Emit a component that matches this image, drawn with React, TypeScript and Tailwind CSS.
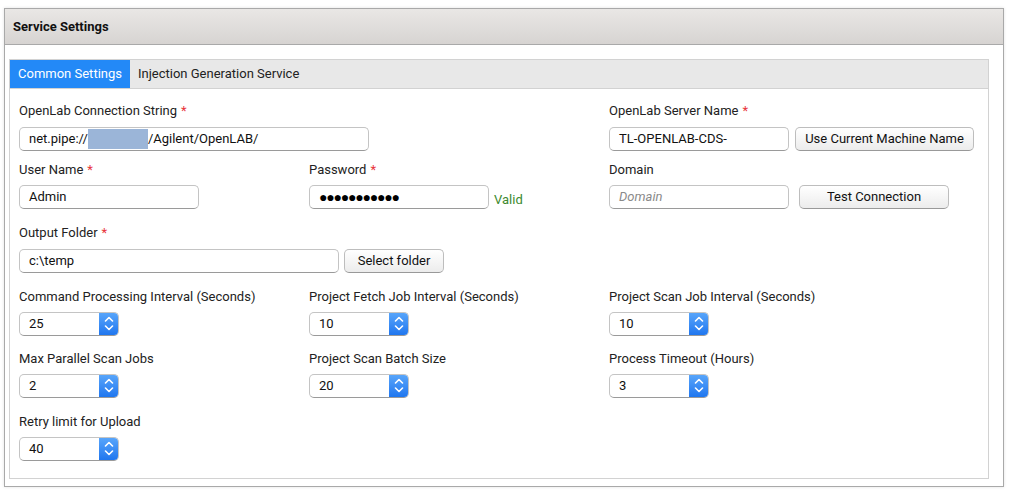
import React from "react";

const font = { fontFamily: "Roboto, 'Liberation Sans', sans-serif" };

function Label({ text, req }: { text: string; req?: boolean }) {
  return (
    <div className="h-4 leading-4 text-[13px] text-[#222]">
      {text}
      {req && <span className="text-[#e8343a] ml-[4px]">*</span>}
    </div>
  );
}

function TextBox({ w, children, placeholder }: { w: string; children?: React.ReactNode; placeholder?: string }) {
  return (
    <div
      className={`${w} h-[24px] rounded-[5px] border border-[#c4c4c4] border-b-[#9a9a9a] bg-white flex items-center pl-[9px] text-[13px] text-[#111] overflow-hidden whitespace-nowrap`}
    >
      {children ?? <span className="italic text-[#8a8a8a]">{placeholder}</span>}
    </div>
  );
}

function Btn({ w, text }: { w: string; text: string }) {
  return (
    <div
      className={`${w} h-[24px] rounded-[5px] border border-[#bdbdbd] border-b-[#999] bg-gradient-to-b from-white to-[#ececec] flex items-center justify-center text-[13px] text-[#111] whitespace-nowrap`}
    >
      {text}
    </div>
  );
}

function Spinner({ value }: { value: string }) {
  return (
    <div className="w-[100px] h-[24px] flex rounded-[5px] border border-[#c4c4c4] border-b-[#9a9a9a] bg-white overflow-hidden">
      <div className="flex-1 flex items-center pl-[9px] text-[13px] text-[#111]">{value}</div>
      <div className="w-[20px] -my-px -mr-px bg-gradient-to-b from-[#5aa7fb] to-[#1c74ee] rounded-r-[5px] flex flex-col items-center justify-center gap-[3px]">
        <svg width="10" height="6" viewBox="0 0 10 6">
          <path d="M1.5 5 L5 1.5 L8.5 5" fill="none" stroke="white" strokeWidth="1.6" strokeLinecap="round" strokeLinejoin="round" />
        </svg>
        <svg width="10" height="6" viewBox="0 0 10 6">
          <path d="M1.5 1 L5 4.5 L8.5 1" fill="none" stroke="white" strokeWidth="1.6" strokeLinecap="round" strokeLinejoin="round" />
        </svg>
      </div>
    </div>
  );
}

function SpinField({ label, value }: { label: string; value: string }) {
  return (
    <div className="flex flex-col gap-[7px]">
      <Label text={label} />
      <Spinner value={value} />
    </div>
  );
}

export default function App() {
  return (
    <div className="w-[1010px] h-[491px] bg-white pt-[8px] pl-[4px]" style={font}>
      <div className="w-[1000px] h-[479px] border border-[#a9a9a9] shadow-[0_0_3px_rgba(0,0,0,0.12)] flex flex-col">
        <div className="h-[36px] shrink-0 bg-gradient-to-b from-[#e9e7e5] to-[#d7d4d2] border-b border-[#a9a9a9] flex items-center pl-[8px] text-[13px] font-bold text-[#111]">
          Service Settings
        </div>
        <div className="pt-[14px] pl-[4px] pr-[14px]">
          <div className="w-[980px] h-[420px] border border-[#d2d2d2] flex flex-col">
            <div className="h-[29px] shrink-0 bg-[#e8e8e8] border-b border-[#d2d2d2] flex text-[13px]">
              <div className="w-[120px] bg-[#2389f7] text-white flex items-center justify-center">Common Settings</div>
              <div className="px-[8px] flex items-center text-[#222]">Injection Generation Service</div>
            </div>
            <div className="pl-[9px] pt-[14px]">
              <div className="grid grid-cols-[590px_1fr]">
                <div className="flex flex-col gap-[8px]">
                  <Label text="OpenLab Connection String" req />
                  <TextBox w="w-[350px]">
                    <span>net.pipe://</span>
                    <span className="inline-block w-[60px] h-[20px] bg-[#9bb5d8]" />
                    <span>/Agilent/OpenLAB/</span>
                  </TextBox>
                </div>
                <div className="flex flex-col gap-[8px]">
                  <Label text="OpenLab Server Name" req />
                  <div className="flex gap-[6px]">
                    <TextBox w="w-[180px]">TL-OPENLAB-CDS-</TextBox>
                    <Btn w="w-[179px]" text="Use Current Machine Name" />
                  </div>
                </div>
              </div>
              <div className="grid grid-cols-[290px_300px_1fr] mt-[11px]">
                <div className="flex flex-col gap-[7px]">
                  <Label text="User Name" req />
                  <TextBox w="w-[180px]">Admin</TextBox>
                </div>
                <div className="flex flex-col gap-[7px]">
                  <Label text="Password" req />
                  <div className="flex items-center gap-[5px]">
                    <TextBox w="w-[180px]">
                      <span className="text-[14px] tracking-[-1.2px] text-black leading-none">●●●●●●●●●●●</span>
                    </TextBox>
                    <span className="text-[13px] text-[#3c8a2e] mt-[5px]">Valid</span>
                  </div>
                </div>
                <div className="flex flex-col gap-[7px]">
                  <Label text="Domain" />
                  <div className="flex gap-[10px]">
                    <TextBox w="w-[180px]" placeholder="Domain" />
                    <Btn w="w-[150px]" text="Test Connection" />
                  </div>
                </div>
              </div>
              <div className="flex flex-col gap-[8px] mt-[15px]">
                <Label text="Output Folder" req />
                <div className="flex gap-[5px]">
                  <TextBox w="w-[320px]">c:\temp</TextBox>
                  <Btn w="w-[100px]" text="Select folder" />
                </div>
              </div>
              <div className="grid grid-cols-[290px_300px_1fr] mt-[16px]">
                <SpinField label="Command Processing Interval (Seconds)" value="25" />
                <SpinField label="Project Fetch Job Interval (Seconds)" value="10" />
                <SpinField label="Project Scan Job Interval (Seconds)" value="10" />
              </div>
              <div className="grid grid-cols-[290px_300px_1fr] mt-[15px]">
                <SpinField label="Max Parallel Scan Jobs" value="2" />
                <SpinField label="Project Scan Batch Size" value="20" />
                <SpinField label="Process Timeout (Hours)" value="3" />
              </div>
              <div className="grid grid-cols-[290px_300px_1fr] mt-[16px]">
                <SpinField label="Retry limit for Upload" value="40" />
              </div>
            </div>
          </div>
        </div>
      </div>
    </div>
  );
}
